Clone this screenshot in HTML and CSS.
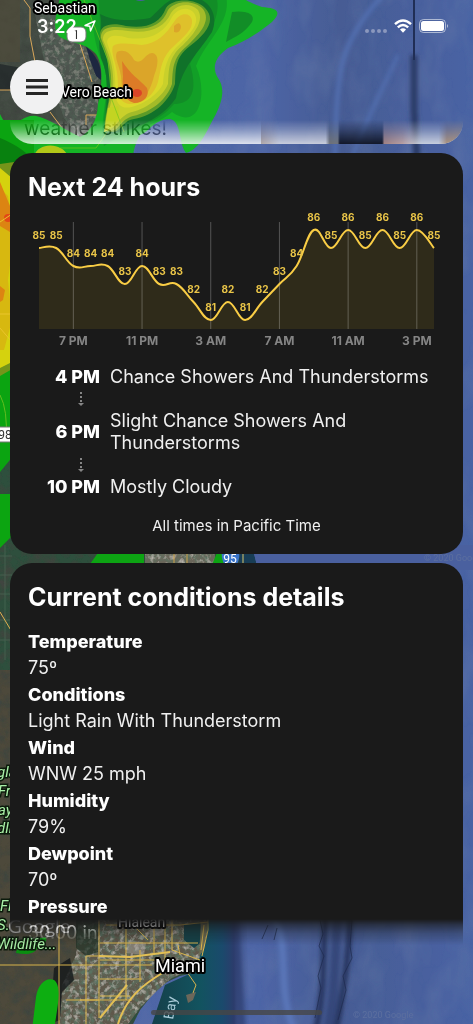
FILE: index.html
```html
<!DOCTYPE html>
<html lang="en">
<head>
    <meta charset="UTF-8">
    <meta name="viewport" content="width=device-width, initial-scale=1.0">
    <title>Weather radar</title>
    <link rel="stylesheet" href="styles.css">
</head>
<body>
    <svg class="map" viewBox="0 0 473 1024" preserveAspectRatio="xMinYMin slice" aria-hidden="true">
        <defs>
            <linearGradient id="sea" x1="0" x2="1" y1="0" y2="0">
                <stop offset="0" stop-color="#4f66a6"/>
                <stop offset=".55" stop-color="#4e65a6"/>
                <stop offset=".72" stop-color="#465c94"/>
                <stop offset="1" stop-color="#4a63a4"/>
            </linearGradient>
            <linearGradient id="coast" x1="0" x2="1" y1="0" y2="0">
                <stop offset="0" stop-color="#153f49"/>
                <stop offset=".5" stop-color="#12535f"/>
                <stop offset=".72" stop-color="#1a4a6c"/>
                <stop offset=".84" stop-color="#2c3c6c"/>
                <stop offset="1" stop-color="#445994" stop-opacity="0"/>
            </linearGradient>
            <filter id="ground" x="0" y="0" width="100%" height="100%">
                <feTurbulence type="fractalNoise" baseFrequency=".09" numOctaves="4" seed="4"/>
                <feColorMatrix values="0 0 0 0 .05  0 0 0 0 .06  0 0 0 0 .05  2.4 0 0 0 -.9"/>
                <feComposite operator="in" in2="SourceGraphic" result="n"/>
                <feMerge><feMergeNode in="SourceGraphic"/><feMergeNode in="n"/></feMerge>
            </filter>
            <filter id="urban" x="0" y="0" width="100%" height="100%">
                <feTurbulence type="fractalNoise" baseFrequency=".2" numOctaves="3" seed="9" result="t"/>
                <feColorMatrix in="t" values="0 0 0 0 .58  0 0 0 0 .55  0 0 0 0 .5  2 0 0 0 -1" result="l"/>
                <feColorMatrix in="t" values="0 0 0 0 .1  0 0 0 0 .17  0 0 0 0 .12  0 2.4 0 0 -.9" result="d"/>
                <feMerge result="m"><feMergeNode in="SourceGraphic"/><feMergeNode in="d"/><feMergeNode in="l"/></feMerge>
                <feComposite in="m" operator="in" in2="SourceGraphic"/>
            </filter>
            <filter id="waves" x="0" y="0" width="100%" height="100%">
                <feTurbulence type="fractalNoise" baseFrequency=".04 .02" numOctaves="3" seed="2"/>
                <feColorMatrix values="0 0 0 0 .15  0 0 0 0 .22  0 0 0 0 .42  .6 0 0 0 -.24"/>
                <feComposite operator="in" in2="SourceGraphic" result="n"/>
                <feMerge><feMergeNode in="SourceGraphic"/><feMergeNode in="n"/></feMerge>
            </filter>
            <filter id="soft"><feGaussianBlur stdDeviation="2"/></filter>
        </defs>

        <!-- ocean floor -->
        <rect width="473" height="1024" fill="url(#sea)" filter="url(#waves)"/>
        <g fill="none" filter="url(#soft)">
            <path d="M382-4C360 20 344 45 340 75S336 120 335 160" stroke="#5371b3" stroke-width="4"/>
            <path d="M398 55C385 85 370 110 352 158" stroke="#5371b3" stroke-width="3"/>
            <path d="M414 55V110L417 160" stroke="#2b3b66" stroke-width="7"/>
            <path d="M326 910C322 950 326 985 316 1030" stroke="#26365f" stroke-width="6"/>
            <path d="M350 910C350 950 344 990 336 1030" stroke="#26365f" stroke-width="6"/>
            <path d="M338 910C334 960 336 990 328 1030" stroke="#35477a" stroke-width="10"/>
            <path d="M235 915L242 1030" stroke="#2f4174" stroke-width="6"/>
            <path d="M272 915C292 945 275 985 294 1030" stroke="#5a76b8" stroke-width="7"/>
        </g>
        <path d="M414-4V60" stroke="#202e55" stroke-width="2"/>
        <path d="M320 920l3 14-4 12 5 10-6 20 3 12-6 30M352 920l-2 26 2 12-9 18 3 14-8 30M268 925l-6 14M277 928l-3 12" fill="none" stroke="#1c2a4d" stroke-width="1" opacity=".7"/>

        <!-- north land -->
        <path d="M0 0H76C84 30 104 50 104 75C102 110 128 130 140 170H0z" fill="#454d45" filter="url(#ground)"/>
        <path d="M34 10L62 5 90 55 100 80 97 118 78 137 64 118 46 70z" fill="#545a56" filter="url(#urban)" opacity=".6"/>
        <path d="M0 0H20V62H0z" fill="#514b38" opacity=".6"/>
        <path d="M0 64L22 68 24 90H0z" fill="#171d22" opacity=".6"/>
        <path d="M86 46C96 56 102 64 101 80L96 76 90 60z" fill="#1d2740"/>
        <g fill="none" stroke="#d9a75a" stroke-width="1">
            <path d="M24 0L30 8V36L35 62M0 90H14M50 112L62 128L80 150"/>
            <path d="M80 44L92 82M86 125V115H98V122M100 122L115 155"/>
        </g>

        <!-- south land -->
        <path d="M0 440H245V600L232 900L206 905L210 940L198 972L180 976L160 985L140 1010L130 1030H0z" fill="#2f4f3c" filter="url(#ground)"/>
        <path d="M0 670H100V1030H0z" fill="#4d4a3a" filter="url(#ground)"/>
        <path d="M0 556H12M0 575H12M0 594H12M0 620H12M0 640H12M5 545V660" stroke="#557460" stroke-width="1" opacity=".5"/>
        <path d="M145 545H215V570H145z" fill="#6a665a" filter="url(#urban)"/>
        <path d="M174 545V570M187 545V570" stroke="#d0a24b" stroke-width="1"/>
        <path d="M240 545H252L258 570H238z" fill="#183d55"/>
        <path d="M252 545H480V570H258z" fill="#4a609f"/>
        <path d="M243 550V568" stroke="#d8c66c" stroke-width="1"/>
        <path d="M0 612L12 632" stroke="#e0b050" stroke-width="1"/>

        <!-- Miami area -->
        <path d="M150 1030L165 985L198 970L208 900H246L250 1030z" fill="url(#coast)"/>
        <path d="M100 900H205L207 935L196 968L172 978L158 990L140 1008L124 1030H58L62 985L76 955L78 925z" fill="#5e584c" filter="url(#urban)"/>
        <path d="M54 968L70 958 74 980 62 992 60 1020 50 1024z" fill="#14181a" opacity=".8"/>
        <path d="M76 918H98V952L86 956 76 948z" fill="#1f2f24" opacity=".7"/>
        <path d="M128 940l18 3-2 12-18-2zM150 925l12-2 2 12-14 2z" fill="#a39d98" opacity=".5"/>
        <path d="M184 925L200 922 204 940 194 948 184 940z" fill="#15434a"/>
        <path d="M201 922L208 920 204 950 199 956z" fill="#6d6d53"/>
        <path d="M186 995L196 992 193 1000 188 1003z" fill="#6b675a"/>
        <g fill="none" stroke="#d8b44d" stroke-width="1">
            <path d="M0 965H152M59 920V1024M86 956V1024M86 956H100M66 1000H132M100 943H198M100 960H155M100 979H142M100 996H130M126 915V1000M140 950V982M165 925V960M154 955V915M178 945L180 955"/>
            <path d="M99 915V1018M172 915V950L186 955L200 960M106 925H180L208 922M126 918L148 940M80 1000H99"/>
            <path d="M208 905V930L202 956M204 925L201 950"/>
            <path d="M187 972L196 985L193 993"/>
        </g>
        <path d="M99 956L130 957L170 952M100 1018L127 985M164 972C142 985 126 998 118 1024" fill="none" stroke="#e2bf55" stroke-width="2"/>

        <!-- radar, north cell -->
        <path d="M60-4C58 10 50 28 60 37C72 44 84 42 95 53C103 62 103 82 98 104C97 122 90 132 80 137C66 130 54 122 40 117C25 112 22 124 8 123C4 123 2 118 0 114V170H130C132 160 134 144 140 135C150 132 152 120 170 119C182 122 178 142 186 153C200 150 208 128 216 114C224 98 224 86 218 78C212 68 214 58 228 48C246 42 262 30 272 22C284 10 274 8 262 7C254 4 248 2 240-4z" fill="#15b426"/>
        <path d="M90-4C92 30 96 50 104 66C112 92 98 118 104 146C124 132 156 126 172 112C200 132 208 92 196 66C206 40 232 22 226-4z" fill="#129f27"/>
        <path d="M98-4C102 30 98 46 104 66C112 92 100 118 106 138C128 130 158 124 174 104C196 104 196 84 190 64C200 44 224 20 216-4z" fill="#128d27"/>
        <path d="M100 14C104 30 96 36 101 58C112 80 104 112 106 135C130 130 160 122 176 98C182 66 196 56 212 32C220 12 206-4 186-4C168-4 160 10 150 18C128 22 110 20 100 14z" fill="#10722a"/>
        <path d="M130-4Q140 6 152-4z" fill="#485f9e"/>
        <path d="M232 12C246 10 256 14 252 22C244 34 236 36 226 42z" fill="#128d27"/>
        <path d="M100 38C98 24 112 22 126 26C146 29 160 24 166 8C172-2 196-2 205 8C217 20 206 34 190 46C174 58 176 70 175 84C170 100 154 116 134 119C120 121 122 136 106 131C102 126 108 108 110 92C112 66 104 52 100 38z" fill="#5c9b28"/>
        <path d="M101 38C100 26 114 26 126 28C148 31 162 26 168 10C176 0 194 0 203 9C211 20 202 32 187 46C172 58 173 70 172 84C167 99 152 112 133 116C118 120 120 134 107 130C103 123 109 106 111 92C113 66 105 50 101 38z" fill="#a3bb29"/>
        <path d="M103 40C102 29 116 29 128 31C150 34 164 28 171 13C177 4 190 2 198 10C204 20 196 32 183 45C168 57 169 70 168 84C163 96 148 108 132 112C118 116 118 128 108 129C104 120 111 108 113 92C115 66 108 52 103 40z" fill="#c9d02b"/>
        <path d="M107 42C108 34 118 35 128 38C150 41 164 33 172 17C178 8 188 6 194 13C200 22 193 31 180 44C166 56 164 70 163 84C158 94 146 103 132 107C122 109 117 106 115 94C117 66 110 52 107 42z" fill="#dbd82b"/>
        <path d="M113 46C118 42 132 44 142 45C158 43 166 34 174 22C180 12 190 12 192 20C193 30 184 36 174 46C162 56 161 68 158 82C154 95 144 103 132 104C120 104 118 96 118 84C118 64 110 54 113 46z" fill="#dfc12b"/>
        <path d="M117 52C123 49 130 52 134 60C142 66 144 54 152 53C160 54 158 66 154 76C150 92 144 102 132 102C122 98 122 88 121 76C119 64 114 58 117 52zM174 26Q180 20 181 27Q180 34 174 32z" fill="#dba529"/>
        <path d="M122 61C130 74 140 80 147 88C150 96 144 103 134 103C124 100 122 90 123 76z" fill="#dc7b27"/>
        <ellipse cx="137" cy="93" rx="5" ry="4" fill="#db4427"/>
        <path d="M108 108L118 106C122 118 114 130 104 132z" fill="#c3d422"/>
        <path d="M84 0L108 60L112 100L124 132M0 135L24 160M60 148H96L110 128" fill="none" stroke="#77c61d" stroke-width="1" opacity=".7"/>

        <!-- radar, west edge -->
        <path d="M0 120H34V160H14V455L0 472z" fill="#0ba411"/>
        <path d="M0 138C14 144 30 152 40 170H0z" fill="#08810f"/>
        <path d="M34 156C38 142 62 142 68 156z" fill="#b2c818"/>
        <path d="M14 162L0 164V376L14 368z" fill="#74941a"/>
        <path d="M0 168L12 178V362L0 368z" fill="#d5d20e"/>
        <path d="M0 188L8 196 12 220V250L8 280 12 320 4 350H0z" fill="#d7b810"/>
        <path d="M0 182L10 206V232L0 226z" fill="#dc8412"/>
        <ellipse cx="8" cy="218" rx="4" ry="4" fill="#e34717"/>
        <path d="M0 286L5 290 3 300 0 302z" fill="#dc8412"/>
        <path d="M0 314H12M0 328L12 342M0 222L12 214" stroke="#eac52c" stroke-width="1"/>
        <path d="M0 494H14V534L0 548z" fill="#0ca511"/>
        <path d="M0 395Q8 410 6 440" fill="none" stroke="#63bd20"/>
        <path d="M90 564L100 550H144V570H90zM210 570L218 550H224V570z" fill="#0da413"/>
        <path d="M36 997C38 984 46 977 54 980C62 986 58 1004 54 1030H32z" fill="#0dae11"/>
        <path d="M16 953C18 942 30 938 42 938C50 934 46 946 38 948C32 956 24 954 16 953z" fill="#0a8e10"/>

        <!-- labels -->
        <g class="map-shield">
            <rect x="67" y="27" width="19" height="15" rx="5"/>
            <text x="76" y="39">1</text>
            <rect x="-5" y="427" width="20" height="15" rx="4"/>
            <text x="5" y="439">98</text>
            <path class="interstate" d="M222 550H239Q241 564 231 570Q220 564 222 550z"/>
            <text class="interstate-text" x="230" y="563">95</text>
        </g>
        <g class="map-label">
            <text x="34" y="13">Sebastian</text>
            <text x="61" y="97">Vero Beach</text>
            <text x="118" y="927">Hialeah</text>
            <text class="city" x="155" y="972">Miami</text>
        </g>
        <g class="map-park">
            <text x="-3" y="777">glades</text>
            <text x="-2" y="796">Francis</text>
            <text x="-2" y="815">ay</text>
            <text x="-3" y="833">dlife</text>
            <text x="0" y="911">Fl</text>
            <text x="-3" y="930">S.</text>
            <text x="-3" y="949">Wildlife...</text>
        </g>
        <text class="map-water" transform="translate(173 1020) rotate(-80)">Bay</text>
        <text class="map-logo" x="8" y="933">Google</text>
        <text class="map-copy" x="353" y="1018">© 2020 Google</text>
        <text class="map-copy" x="424" y="561">© 2020 Google</text>
    </svg>

    <div class="screen">
        <header class="status-bar">
            <time>3:22</time>
            <svg class="location" viewBox="0 0 12 12" width="12" height="12" aria-hidden="true">
                <path d="M11 1L1 5.5L5.8 6.2L6.5 11z" fill="none" stroke="#fff" stroke-width="1.4" stroke-linejoin="round"/>
            </svg>
            <svg class="signal" viewBox="0 0 22 14" width="22" height="14" aria-hidden="true">
                <circle cx="2" cy="12" r="2"/><circle cx="8" cy="12" r="2"/><circle cx="14" cy="12" r="2"/><circle cx="20" cy="12" r="2"/>
            </svg>
            <svg viewBox="0 0 18 14" width="18" height="14" aria-hidden="true">
                <g fill="none" stroke="#fff" stroke-width="2.4">
                    <path d="M1 5.2Q9-2.200 17 5.200"/>
                    <path d="M3.800 8.300Q9 3.500 14.200 8.300"/>
                </g>
                <path d="M6 10.600Q9 8 12 10.600L9 13.800z" fill="#fff"/>
            </svg>
            <svg viewBox="0 0 30 14" width="30" height="14" aria-hidden="true">
                <rect x=".5" y=".5" width="26" height="13" rx="4" fill="none" stroke="#fff" stroke-opacity=".55"/>
                <rect x="2" y="2" width="23" height="10" rx="2.500" fill="#fff"/>
                <path d="M28 5Q30 7 28 9z" fill="#fff" fill-opacity=".6"/>
            </svg>
        </header>

        <button class="menu-button" type="button" aria-label="Menu">
            <svg viewBox="0 0 22 16" width="22" height="16">
                <path d="M0 1.500H22M0 8H22M0 14.500H22" stroke="#262626" stroke-width="3"/>
            </svg>
        </button>

        <main class="feed">
            <section class="card promo">
                <p>weather strikes!</p>
                <div class="promo-photo"></div>
            </section>

            <section class="card">
                <h2>Next 24 hours</h2>
                <svg class="chart" id="chart" viewBox="0 0 417 145" role="img" aria-label="Hourly temperature"></svg>
                <ol class="timeline">
                    <li><b>4 PM</b><span>Chance Showers And Thunderstorms</span></li>
                    <li><b>6 PM</b><span>Slight Chance Showers And Thunderstorms</span></li>
                    <li><b>10 PM</b><span>Mostly Cloudy</span></li>
                </ol>
                <p class="note">All times in Pacific Time</p>
            </section>

            <section class="card">
                <h2>Current conditions details</h2>
                <dl class="details">
                    <dt>Temperature</dt>
                    <dd>75º</dd>
                    <dt>Conditions</dt>
                    <dd>Light Rain With Thunderstorm</dd>
                    <dt>Wind</dt>
                    <dd>WNW 25 mph</dd>
                    <dt>Humidity</dt>
                    <dd>79%</dd>
                    <dt>Dewpoint</dt>
                    <dd>70º</dd>
                    <dt>Pressure</dt>
                    <dd>30.00 in</dd>
                </dl>
            </section>
        </main>

        <footer class="home-area"><div class="home-indicator"></div></footer>
    </div>

    <script src="script.js"></script>
</body>
</html>
```
FILE: styles.css
```css
* {
    margin: 0;
    padding: 0;
    box-sizing: border-box;
}

body {
    font-family: Inter, "Liberation Sans", sans-serif;
    font-size: 18px;
    color: #fff;
    background: #475f9c;
    overflow: hidden;
}

.map {
    position: fixed;
    inset: 0;
    width: 100%;
    height: 100%;
}

.map-label {
    font-family: Roboto, sans-serif;
    font-size: 14px;
    fill: #fff;
    stroke: #000;
    stroke-width: 4px;
    stroke-linejoin: round;
    paint-order: stroke;
}

.map-label .city {
    font-size: 18px;
}

.map-park {
    font-family: Roboto, sans-serif;
    font-size: 15px;
    font-style: italic;
    fill: #a9efa6;
    stroke: #0b1a0b;
    stroke-width: 3px;
    paint-order: stroke;
}

.map-shield {
    font-family: Roboto, sans-serif;
    font-size: 12px;
    text-anchor: middle;
    fill: #333;
}

.map-shield rect {
    fill: #fff;
    stroke: #777;
}

.map-shield .interstate {
    fill: #3b74c9;
}

.map-shield .interstate-text {
    fill: #fff;
}

.map-water {
    font-family: Roboto, sans-serif;
    font-size: 14px;
    fill: #a9cbd8;
}

.map-logo {
    font-family: "Open Sans", sans-serif;
    font-size: 19px;
    fill: #c4c4c0;
    stroke: #444;
    stroke-width: 1px;
    paint-order: stroke;
}

.map-copy {
    font-family: Roboto, sans-serif;
    font-size: 9px;
    fill: #5c6f9f;
}

.screen {
    position: relative;
    height: 100vh;
    display: flex;
    flex-direction: column;
}

.status-bar {
    display: flex;
    align-items: center;
    gap: 7px;
    height: 120px;
    padding: 0 24px 68px 37px;
    flex-shrink: 0;
}

.status-bar time {
    font-size: 18px;
    font-weight: 600;
}

.signal {
    margin-left: auto;
    fill: #8b98bd;
}

.menu-button {
    position: absolute;
    left: 10px;
    top: 60px;
    width: 54px;
    height: 54px;
    border: none;
    border-radius: 50%;
    background: #f1f1f2;
    display: flex;
    align-items: center;
    justify-content: center;
    cursor: pointer;
}

.feed {
    flex: 1;
    min-height: 0;
    overflow: hidden;
    padding: 0 10px;
    display: flex;
    flex-direction: column;
    gap: 9px;
    mask-image: linear-gradient(transparent 0, rgba(0, 0, 0, 0.3) 10px, rgba(0, 0, 0, 0.8) 24px, #000 30px, #000 calc(100% - 26px), rgba(0, 0, 0, 0.65) calc(100% - 20px), rgba(0, 0, 0, 0.3) calc(100% - 12px), transparent);
}

.card {
    flex-shrink: 0;
    padding: 18px;
    border-radius: 22px;
    background: #1a1a1a;
}

.card h2 {
    font-size: 25px;
    line-height: 32px;
    font-weight: 700;
}

.promo {
    display: flex;
    padding: 0 0 0 14px;
    border-radius: 0 0 22px 22px;
    background: #fff;
    color: #222;
    overflow: hidden;
    font-size: 19px;
    line-height: 17px;
    height: 24px;
}

.promo p {
    flex: 1;
}

.promo-photo {
    width: 46%;
    background: linear-gradient(90deg, #cbb9a8 0, #e8e8ec 9%, #e8e8ec 32%, #77766f 34%, #77766f 38%, #05070f 39%, #05070f 60%, #b98c7f 61%, #d5b0a4 70%, #e6e9ee 78%, #e6e9ee 88%, #c7a074 92%);
}

.chart {
    display: block;
    width: 100%;
    margin: 4px 0 14px;
    overflow: visible;
}

.chart .area {
    fill: #f0c820;
    fill-opacity: 0.1;
}

.chart .line {
    fill: none;
    stroke: #f9cd45;
    stroke-width: 2px;
}

.chart .grid {
    stroke: #fff;
    stroke-opacity: 0.25;
}

.chart text {
    text-anchor: middle;
    font-weight: 700;
}

.chart .value {
    font-size: 10px;
    fill: #eac548;
}

.chart .hour {
    font-size: 12px;
    fill: #858585;
}

.timeline {
    list-style: none;
    line-height: 22px;
}

.timeline li {
    display: grid;
    grid-template-columns: 72px 1fr;
    column-gap: 10px;
    align-items: center;
}

.timeline b {
    font-weight: 800;
    text-align: right;
}

.timeline span {
    color: #f0f0f0;
}

/* dotted arrow between two steps */
.timeline li + li::before {
    content: "";
    grid-column: 1 / -1;
    width: 6px;
    height: 14px;
    margin: 4px 0 4px 50px;
    background:
        linear-gradient(#858585, #858585) bottom / 6px 3px no-repeat,
        repeating-linear-gradient(#858585 0 2px, transparent 2px 4px) top / 2px 10px no-repeat;
    clip-path: polygon(0 0, 100% 0, 100% 11px, 50% 100%, 0 11px);
}

.note {
    margin-top: 17px;
    font-size: 15px;
    line-height: 21px;
    text-align: center;
    color: #f0f0f0;
}

.details {
    margin-top: 15px;
}

.details dt {
    font-weight: 800;
    line-height: 27px;
}

.details dd {
    line-height: 26px;
    color: #f0f0f0;
}

.home-area {
    height: 79px;
    flex-shrink: 0;
    display: flex;
    align-items: flex-end;
    justify-content: center;
    padding-bottom: 9px;
}

.home-indicator {
    width: 36%;
    height: 5px;
    border-radius: 3px;
    background: rgba(70, 70, 70, 0.8);
}
```
FILE: script.js
```js
const temps = [85, 85, 84, 84, 84, 83, 84, 83, 83, 82, 81, 82, 81, 82, 83, 84, 86, 85, 86, 85, 86, 85, 86, 85];
const hours = { 2: '7 PM', 6: '11 PM', 10: '3 AM', 14: '7 AM', 18: '11 AM', 22: '3 PM' };

const chart = document.getElementById('chart');
const left = 11;
const right = 406;
const bottom = 122;
const step = (right - left) / (temps.length - 1);
const points = temps.map((t, i) => [left + i * step, 23 + (86 - t) * 18]);

function add(tag, attrs, text) {
    const el = document.createElementNS('http://www.w3.org/2000/svg', tag);
    for (const key in attrs) el.setAttribute(key, attrs[key]);
    if (text) el.textContent = text;
    chart.appendChild(el);
}

// smooth curve through all points
let line = `M${points[0]}`;
for (let i = 0; i < points.length - 1; i++) {
    const p0 = points[i - 1] || points[i];
    const p1 = points[i];
    const p2 = points[i + 1];
    const p3 = points[i + 2] || p2;
    const c1 = [p1[0] + (p2[0] - p0[0]) / 5, p1[1] + (p2[1] - p0[1]) / 5];
    const c2 = [p2[0] - (p3[0] - p1[0]) / 5, p2[1] - (p3[1] - p1[1]) / 5];
    line += `C${c1} ${c2} ${p2}`;
}

add('path', { class: 'area', d: `${line}V${bottom}H${left}Z` });
for (const i in hours) {
    const x = points[i][0];
    add('line', { class: 'grid', x1: x, x2: x, y1: 15, y2: bottom });
    add('text', { class: 'hour', x: x, y: 138 }, hours[i]);
}
add('path', { class: 'line', d: line });
points.forEach(([x, y], i) => {
    add('text', { class: 'value', x: x, y: y - 9 }, String(temps[i]));
});
```
